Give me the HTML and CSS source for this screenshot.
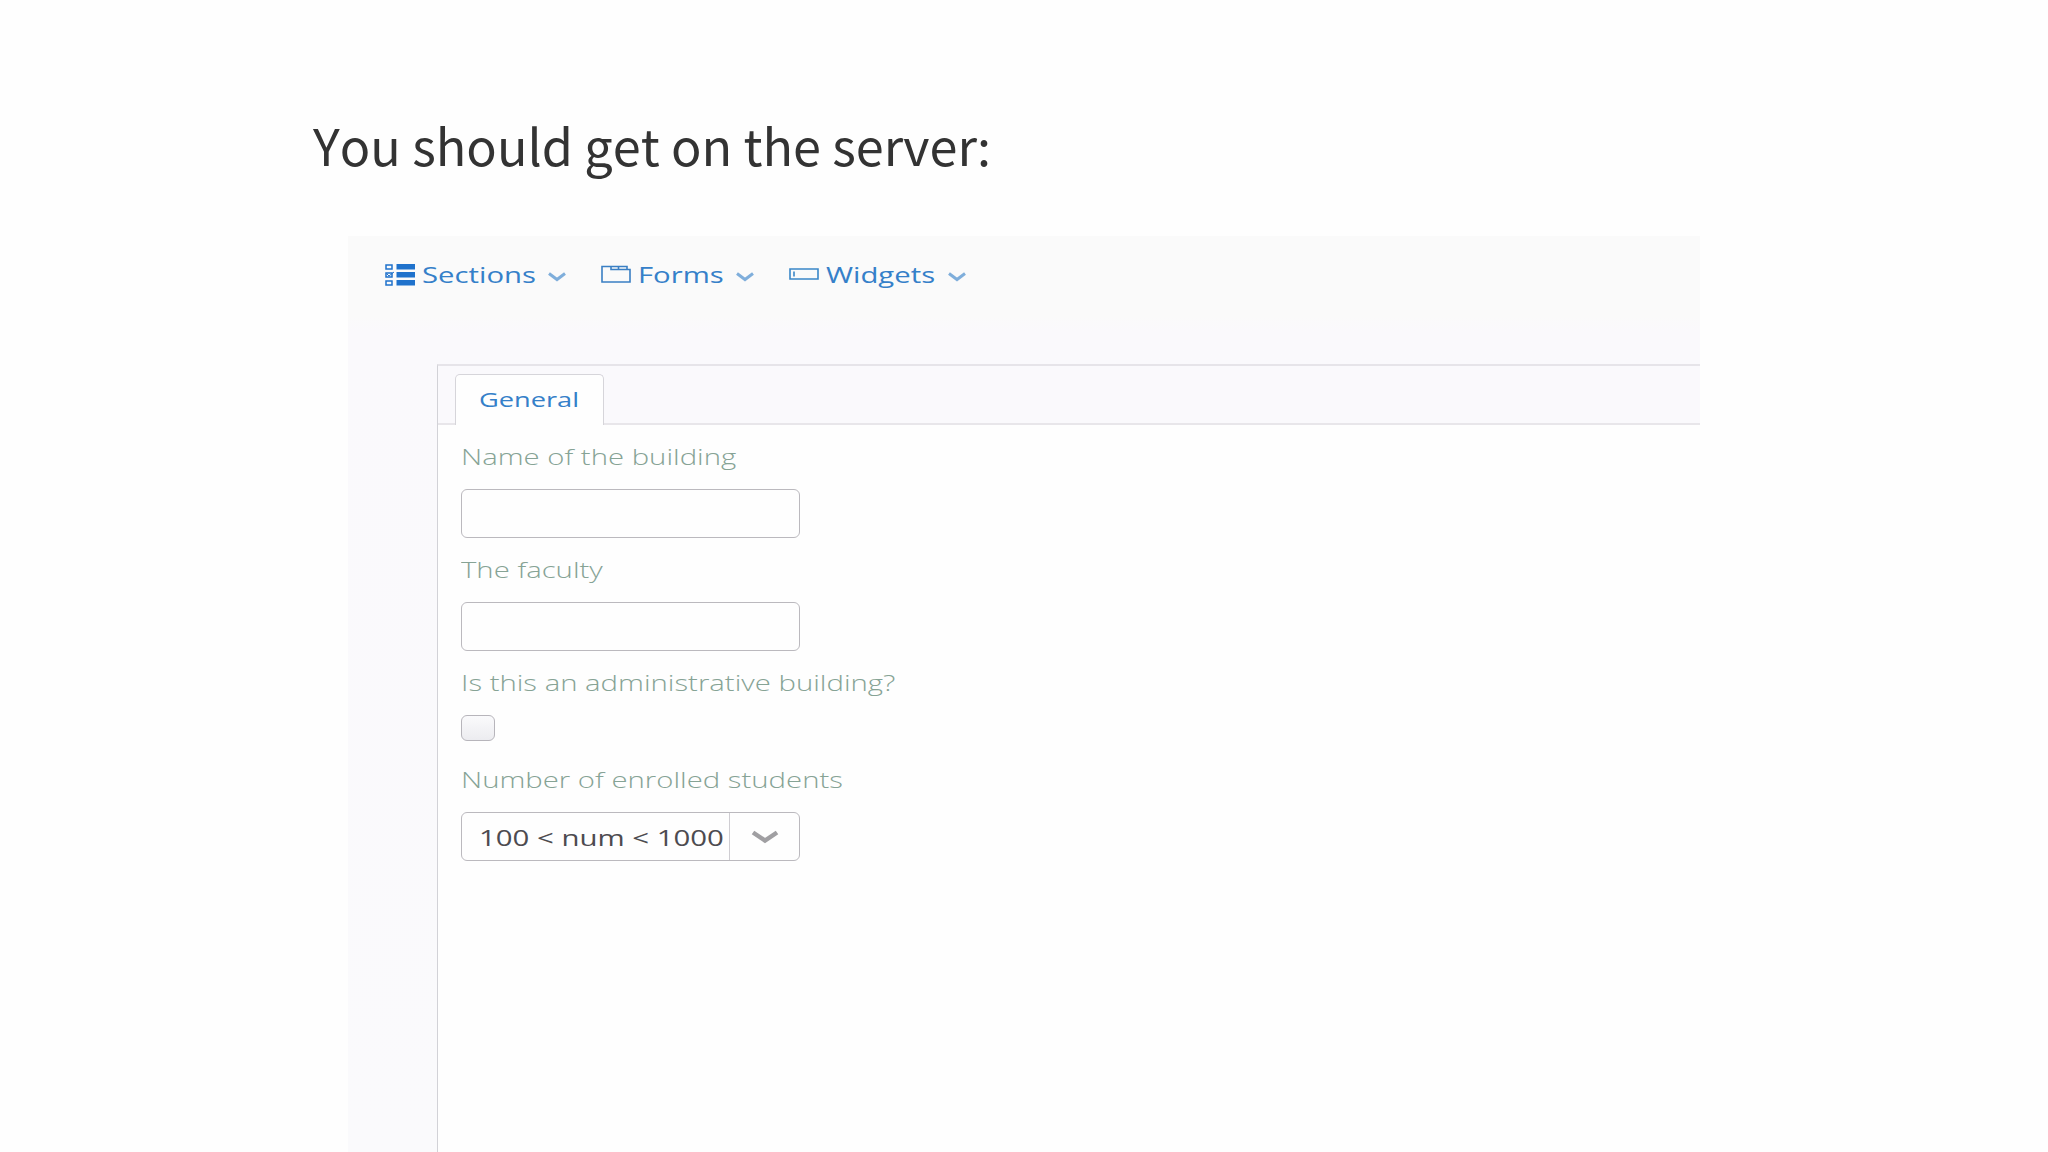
FILE: index.html
```html
<!DOCTYPE html>
<html lang="en">
<head>
    <meta charset="UTF-8">
    <title>Building form</title>
    <link rel="stylesheet" href="styles.css">
</head>
<body>
    <h1>You should get on the server:</h1>

    <div class="app">
        <nav class="menu">
            <a class="menu-item sections">
                <svg class="icon" width="30" height="22" viewBox="0 0 30 22">
                    <path d="M1 1h6v4H1zM1 9h6v4H1zM1 17h6v4H1z" fill="none" stroke="#1f72cc" stroke-width="1.5"/>
                    <path d="M11.5 0H30v5.500H11.500zM11.500 8H30v5.500H11.500zM11.500 16H30v5.500H11.500z" fill="#1f72cc"/>
                    <path d="M2 10l2 2 5-4" fill="none" stroke="#1f72cc"/>
                </svg>
                <span class="wide">Sections</span>
                <svg class="chevron" width="18" height="10" viewBox="0 0 18 10"><path d="M1 1.500l8 6 8-6"/></svg>
            </a>
            <a class="menu-item forms">
                <svg class="icon" width="30" height="22" viewBox="0 0 30 22">
                    <path d="M1 2.500h25v3h3v12.500H1zM10 2.500v3h16M17.500 2.500v3" fill="none" stroke="#3a7fc4" stroke-width="1.600"/>
                </svg>
                <span class="wide">Forms</span>
                <svg class="chevron" width="18" height="10" viewBox="0 0 18 10"><path d="M1 1.500l8 6 8-6"/></svg>
            </a>
            <a class="menu-item widgets">
                <svg class="icon" width="30" height="22" viewBox="0 0 30 22">
                    <path d="M1 5h28v10H1zM5 7.500v5" fill="none" stroke="#3a87c8" stroke-width="1.600"/>
                </svg>
                <span class="wide">Widgets</span>
                <svg class="chevron" width="18" height="10" viewBox="0 0 18 10"><path d="M1 1.500l8 6 8-6"/></svg>
            </a>
        </nav>

        <div class="panel">
            <div class="tabs">
                <div class="tab"><span class="wide">General</span></div>
            </div>
            <form class="fields">
                <label for="name"><span class="wide">Name of the building</span></label>
                <input type="text" id="name">
                <label for="faculty"><span class="wide">The faculty</span></label>
                <input type="text" id="faculty">
                <label for="admin"><span class="wide">Is this an administrative building?</span></label>
                <input type="checkbox" id="admin">
                <label><span class="wide">Number of enrolled students</span></label>
                <div class="select">
                    <div class="value"><span class="wide">100 &lt; num &lt; 1000</span></div>
                    <div class="arrow">
                        <svg width="28" height="14" viewBox="0 0 28 14"><path d="M2 2.500l12 8 12-8" fill="none" stroke="#a09fa2" stroke-width="4.500"/></svg>
                    </div>
                </div>
            </form>
        </div>
    </div>
</body>
</html>
```
FILE: styles.css
```css
* {
    box-sizing: border-box;
}

body {
    margin: 0;
    height: 1152px;
    overflow: hidden;
    background-color: #fefefe;
    font-family: "Open Sans", sans-serif;
    display: flex;
    flex-direction: column;
}

h1 {
    margin: 0;
    padding: 108px 0 0 313px;
    height: 236px;
    font-family: "Noto Sans CJK SC", sans-serif;
    font-size: 50.4px;
    font-kerning: none;
    line-height: 74px;
    font-weight: 400;
    color: #333;
    white-space: nowrap;
}

.app {
    flex: 1;
    width: 1352px;
    margin-left: 348px;
    padding-left: 89px;
    background: linear-gradient(#fafafa, #fafafa 80px, #faf9fc 95px, #fafafc);
    display: flex;
    flex-direction: column;
}

/* letters are drawn wider than the font's own shapes */
.wide {
    display: inline-block;
    transform: scaleX(1.36);
    transform-origin: left center;
    white-space: nowrap;
}

.menu {
    display: flex;
    height: 128px;
    margin-left: -52px;
    padding-top: 22px;
}

.menu-item {
    display: flex;
    align-items: center;
    height: 34px;
    color: #3580c9;
    font-size: 21px;
    line-height: 34px;
}

.sections {
    width: 216px;
}

.forms {
    width: 188px;
}

.widgets {
    width: 178px;
}

.menu-item .icon {
    flex: none;
    margin-right: 7px;
}

.menu-item .wide {
    width: 126px;
    transform: scaleX(1.395);
}

.forms .wide {
    width: 98px;
}

.widgets .wide {
    width: 122px;
}

.chevron {
    flex: none;
    margin-top: 3px;
    fill: none;
    stroke: #7faedb;
    stroke-width: 3;
}

.panel {
    flex: 1;
    background-color: #fefefe;
    border-top: 2px solid #e6e4e9;
    border-left: 1px solid #d2d2d7;
}

.tabs {
    height: 59px;
    padding: 8px 0 0 17px;
    background-color: #faf9fc;
    border-bottom: 2px solid #e8e6ea;
}

.tab {
    width: 149px;
    height: 51px;
    padding-left: 23px;
    background-color: #fefefe;
    border: 1px solid #d6d5da;
    border-bottom: none;
    border-radius: 5px 5px 0 0;
    color: #3580c9;
    font-size: 20px;
    line-height: 49px;
}

.fields {
    display: flex;
    flex-direction: column;
    align-items: flex-start;
    padding: 15px 0 0 23px;
}

label {
    height: 49px;
    font-size: 22px;
    line-height: 33px;
    font-weight: 300;
    color: #86a395;
}

label .wide {
    transform: scaleX(1.332);
}

input[type="text"] {
    width: 339px;
    height: 49px;
    margin: 0 0 15px;
    background-color: #fefefe;
    border: 1px solid #bbb9be;
    border-radius: 6px;
}

input[type="checkbox"] {
    appearance: none;
    width: 34px;
    height: 26px;
    margin: 0 0 22px;
    background: linear-gradient(#fafafc, #ececf0);
    border: 1px solid #b7b5bb;
    border-radius: 6px;
}

.select {
    display: flex;
    width: 339px;
    height: 49px;
    border: 1px solid #bbb9be;
    border-radius: 6px;
}

.value {
    width: 268px;
    padding-left: 17px;
    border-right: 1px solid #cfcdd2;
    color: #4d4b50;
    font-size: 22px;
    line-height: 48px;
}

.value .wide {
    transform: scaleX(1.335);
}

.arrow {
    flex: 1;
    display: flex;
    align-items: center;
    justify-content: center;
}
```
